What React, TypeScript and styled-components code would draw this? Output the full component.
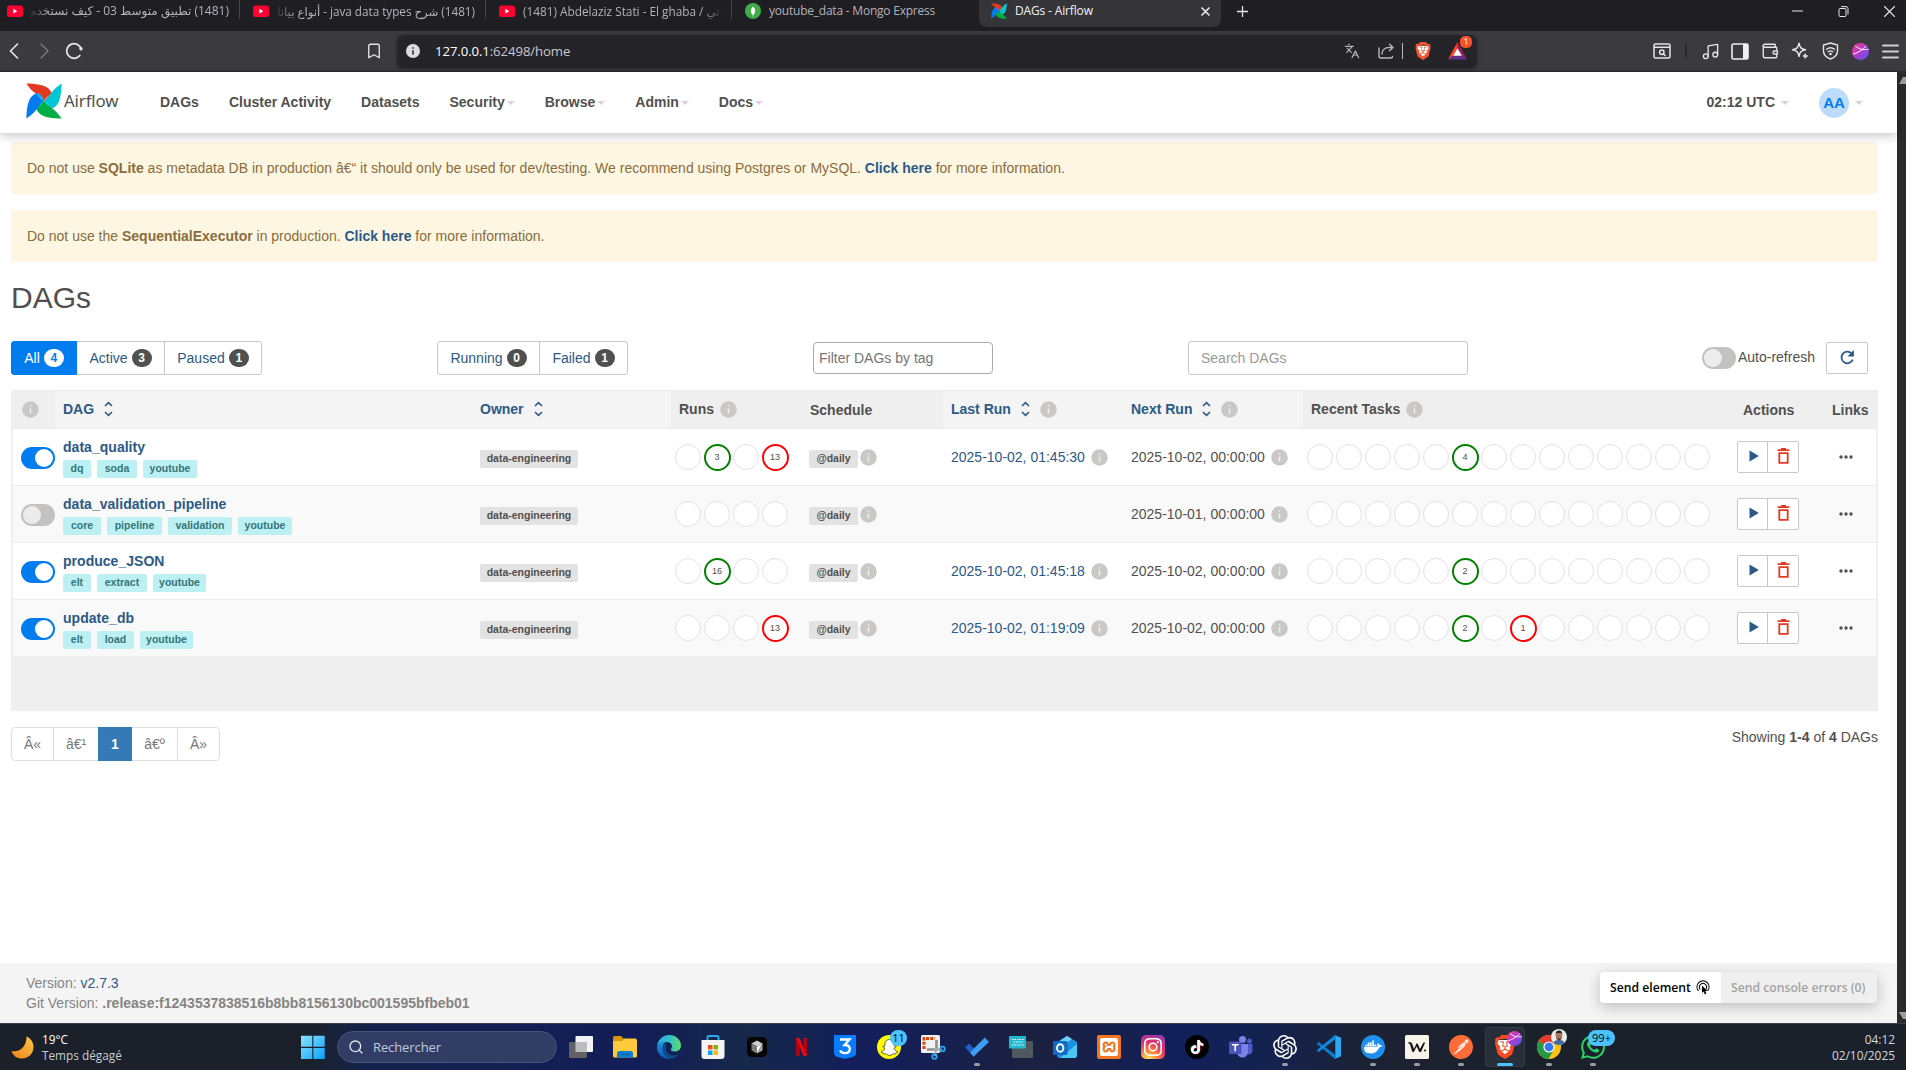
import React from "react";
import styled, { createGlobalStyle, css } from "styled-components";
import { SiBrave, SiOpenai, SiDocker, SiPostman, SiInstagram, SiTiktok, SiSnapchat, SiXampp, SiWhatsapp } from "react-icons/si";
import { Bookmark, Languages, Music, Wallet, Search } from "lucide-react";

const UI = `"Open Sans", "Noto Sans", "DejaVu Sans", sans-serif`;
const SANS = `"Liberation Sans", Arial, sans-serif`;
const LINK = "#2c5987";

const Global = createGlobalStyle`
  * { box-sizing: border-box; }
  html, body { margin: 0; padding: 0; overflow: hidden; background: #fff; }
  svg { display: block; flex: none; }
`;

const Screen = styled.div`
  width: 1906px;
  height: 1070px;
  display: flex;
  flex-direction: column;
  overflow: hidden;
  font-family: ${SANS};
  font-size: 14px;
  color: #51504f;
`;

/* ---------- browser chrome ---------- */

const TabStrip = styled.div`
  height: 31px;
  flex: none;
  display: flex;
  background: #1f1e23;
  font-family: ${UI};
  font-size: 12px;
`;

const Tab = styled.div<{ $first?: boolean }>`
  width: ${(p) => (p.$first ? 240 : 246)}px;
  height: 27px;
  flex: none;
  display: flex;
  align-items: center;
  padding: 0 11px 5px ${(p) => (p.$first ? 7 : 13)}px;
  gap: 8px;
  color: #b4b3b8;
  background: linear-gradient(#45444a, #45444a) right 0 top 0 / 1px 19px no-repeat;
`;

const ActiveTab = styled.div`
  width: 242px;
  height: 27px;
  margin-left: 1px;
  flex: none;
  display: flex;
  align-items: center;
  gap: 8px;
  padding: 0 11px 5px 12px;
  color: #f2f2f4;
  background: #353439;
  border-radius: 0 0 8px 8px;
`;

const PlainTab = styled(Tab)`
  background: none;
`;

const TabTitle = styled.div<{ $rtl?: boolean; $fade?: boolean; $ls?: number; $fs?: number }>`
  flex: 1;
  min-width: 0;
  overflow: hidden;
  white-space: nowrap;
  line-height: 20px;
  font-size: ${(p) => p.$fs ?? 12}px;
  letter-spacing: ${(p) => p.$ls ?? 0}px;
  direction: ${(p) => (p.$rtl ? "rtl" : "ltr")};
  ${(p) =>
    p.$fade &&
    css`
      mask-image: linear-gradient(to ${p.$rtl ? "left" : "right"}, #000 90%, rgba(0, 0, 0, 0.15));
    `}
`;

const PlusBox = styled.div`
  width: 42px;
  height: 22px;
  display: grid;
  place-items: center;
`;

const WindowButtons = styled.div`
  margin: 0 -6px 0 auto;
  display: flex;
  height: 22px;
`;

const WindowButton = styled.div`
  width: 46px;
  display: grid;
  place-items: center;
`;

const Toolbar = styled.div`
  height: 41px;
  flex: none;
  display: flex;
  align-items: center;
  background: #3b3a3f;
  border-bottom: 1px solid #2a292d;
  color: #e6e6e8;
`;

const NavButtons = styled.div`
  display: flex;
  align-items: center;
  width: 365px;
  padding-left: 7px;
  gap: 15px;
`;

const UrlBar = styled.div`
  width: 1080px;
  height: 33px;
  margin-left: 16px;
  display: flex;
  align-items: center;
  padding: 0 1px 0 9px;
  border-radius: 7px;
  background: #252429;
  box-shadow: 0 1px 4px rgba(0, 0, 0, 0.35);
`;

const BookmarkSlot = styled.div`
  width: 16px;
`;

const UrlText = styled.div`
  font-family: ${UI};
  font-size: 13.2px;
  letter-spacing: -0.1px;
  margin-left: 15px;
  color: #c9c9cd;
  flex: 1;
  b { font-weight: 400; color: #fff; }
`;

const UrlIcons = styled.div`
  display: flex;
  align-items: center;
  color: #b9b9bd;
`;

const ShareSlot = styled.div`
  margin-left: 18px;
`;

const UrlDivider = styled.i`
  width: 1px;
  height: 16px;
  margin: 0 11px 0 8px;
  background: #b9b9bd;
`;

const RewardSlot = styled.div`
  position: relative;
  width: 28px;
  margin-left: 16px;
`;

const RewardBadge = styled.span`
  position: absolute;
  right: 4px;
  top: -6px;
  width: 12px;
  height: 12px;
  border-radius: 5px;
  background: #f9502a;
  color: #fff;
  font: 9px/12px ${UI};
  text-align: center;
`;

const ToolIcons = styled.div`
  margin-left: auto;
  display: flex;
  align-items: center;
`;

const ToolSlot = styled.div<{ $w?: number }>`
  width: ${(p) => p.$w ?? 30}px;
  display: grid;
  place-items: center;
`;

/* ---------- web page ---------- */

const PageRow = styled.div`
  height: 951px;
  flex: none;
  display: flex;
`;

const Page = styled.div`
  width: 1897px;
  flex: none;
  display: flex;
  flex-direction: column;
  background: #fff;
`;

const Scrollbar = styled.div`
  flex: 1;
  background: #2b2b2b;
  display: flex;
  flex-direction: column;
  justify-content: space-between;
  align-items: flex-end;
  padding: 5px 0 4px;
  overflow: hidden;
`;

const NavBar = styled.nav`
  height: 61px;
  flex: none;
  display: flex;
  align-items: center;
  padding: 0 34px 2px 26px;
  background: #fff;
  position: relative;
  z-index: 1;
  box-shadow: 0 3px 10px rgba(0, 0, 0, 0.22);
  font-weight: 700;
`;

const Brand = styled.div`
  display: flex;
  align-items: center;
  width: 134px;
  gap: 2px;
  padding-bottom: 2px;
  font: 400 16.8px/20px "Noto Sans", sans-serif;
  letter-spacing: -0.1px;
`;

const NavItem = styled.div<{ $gap?: number; $last?: boolean }>`
  margin-right: ${(p) => (p.$last ? 0 : 30)}px;
  display: flex;
  align-items: center;
  gap: ${(p) => p.$gap ?? 2}px;
`;

const NavRight = styled.div`
  margin-left: auto;
  display: flex;
  align-items: center;
`;

const Caret = styled.i`
  border: 4px solid transparent;
  border-bottom: 0;
  border-top-color: #e3cfe3;
  margin-top: 2px;
`;

const Avatar = styled.span`
  width: 30px;
  height: 30px;
  border-radius: 50%;
  background: #bddcfb;
  color: #017cee;
  display: grid;
  place-items: center;
  font-size: 15px;
  margin-top: 2px;
`;

const Content = styled.main`
  flex: 1;
  display: flex;
  flex-direction: column;
  padding: 9px 19px 0 11px;
`;

const Alert = styled.div`
  height: 52px;
  margin-bottom: 16px;
  padding: 0 16px;
  display: flex;
  align-items: center;
  border-radius: 3px;
  background: #fdf6e3;
  color: #8a6d3b;
  white-space: pre;
  a { color: ${LINK}; font-weight: 700; }
`;

const Heading = styled.h2`
  margin: 3px 0 0;
  font-size: 30px;
  line-height: 34px;
  font-weight: 400;
`;

const Controls = styled.div`
  height: 34px;
  margin-top: 26px;
  display: grid;
  grid-template-columns: 426px 376px 375px 1fr;
  align-items: center;
`;

const Group = styled.div`
  display: flex;
`;

const FilterButton = styled.div<{ $on?: boolean; $w: number }>`
  width: ${(p) => p.$w}px;
  height: 34px;
  display: flex;
  align-items: center;
  justify-content: center;
  gap: 4px;
  border: 1px solid #c8c8c8;
  margin-left: -1px;
  color: ${LINK};
  &:first-child { margin-left: 0; border-radius: 3px 0 0 3px; }
  &:last-child { border-radius: 0 3px 3px 0; }
  ${(p) => p.$on && css`background: #017cee; border-color: #017cee; color: #fff; z-index: 1;`}
`;

const Count = styled.span<{ $on?: boolean }>`
  width: 20px;
  height: 18px;
  border-radius: 9px;
  background: ${(p) => (p.$on ? "#fff" : "#51504f")};
  color: ${(p) => (p.$on ? "#017cee" : "#fff")};
  font-size: 12px;
  font-weight: 700;
  line-height: 18px;
  text-align: center;
`;

const TagFilter = styled.div`
  width: 180px;
  height: 32px;
  border: 1px solid #aaa;
  border-radius: 4px;
  padding-left: 5px;
  line-height: 30px;
  color: #757575;
`;

const SearchBox = styled.div`
  width: 280px;
  height: 34px;
  border: 1px solid #c8c8c8;
  border-radius: 3px;
  padding-left: 12px;
  line-height: 32px;
  color: #999;
`;

const RefreshArea = styled.div`
  display: flex;
  align-items: center;
  justify-content: flex-end;
  padding-right: 10px;
`;

const SearchRow = styled.div`
  display: flex;
  align-items: center;
  justify-content: space-between;
`;

const RefreshLabel = styled.span`
  margin: 0 11px 2px 2px;
`;

const RefreshButton = styled.div`
  width: 42px;
  height: 32px;
  border: 1px solid #c8c8c8;
  border-radius: 2px;
  display: grid;
  place-items: center;
  padding-bottom: 2px;
`;

const Switch = styled.span<{ $on?: boolean; $drop?: boolean }>`
  width: 34px;
  height: 22px;
  flex: none;
  border-radius: 11px;
  padding: 2px;
  margin-top: ${(p) => (p.$drop ? 2 : 0)}px;
  display: flex;
  justify-content: ${(p) => (p.$on ? "flex-end" : "flex-start")};
  background: ${(p) => (p.$on ? "#017cee" : "#c4c2c1")};
  &::after {
    content: "";
    width: 18px;
    height: 18px;
    border-radius: 50%;
    background: ${(p) => (p.$on ? "#fff" : "#edecec")};
  }
`;

const Table = styled.div`
  margin-top: 15px;
  height: 321px;
  background: #efefef;
  border-radius: 3px 3px 0 0;
`;

const columns = css`
  display: grid;
  grid-template-columns: 44px 416px 200px 131px 141px 180px 180px 425px 101px 1fr;
`;

const HeadRow = styled.div`
  ${columns}
  height: 39px;
  border: solid #ececec;
  border-width: 1px 0;
  font-weight: 700;
`;

const HeadCell = styled.div<{ $sort?: boolean; $pl?: number; $drop?: boolean }>`
  display: flex;
  align-items: center;
  gap: ${(p) => (p.$sort ? 10 : 6)}px;
  padding-left: ${(p) => p.$pl ?? 8}px;
  padding-bottom: ${(p) => (p.$drop ? 0 : 1)}px;
  white-space: nowrap;
  ${(p) => p.$sort && css`background: #f4f4f4; color: ${LINK};`}
`;

const Row = styled.div<{ $odd?: boolean; $last?: boolean }>`
  ${columns}
  grid-template-columns: 42px 416px 200px 131px 141px 180px 180px 425px 101px 1fr;
  height: ${(p) => (p.$last ? 56 : 57)}px;
  margin: 0 2px;
  background: ${(p) => (p.$odd ? "#f9f9f9" : "#fff")};
  border-bottom: ${(p) => (p.$last ? 0 : 1)}px solid #ececec;
`;

const Cell = styled.div<{ $pl?: number; $gap?: number }>`
  display: flex;
  align-items: center;
  padding-left: ${(p) => p.$pl ?? 8}px;
  gap: ${(p) => p.$gap ?? 0}px;
  white-space: nowrap;
`;

const NameCell = styled.div`
  padding: 9px 0 0 8px;
  display: flex;
  flex-direction: column;
  gap: 3px;
`;

const DagName = styled.a`
  font-weight: 700;
  line-height: 19px;
  letter-spacing: 0.03px;
  color: ${LINK};
`;

const Tags = styled.div`
  display: flex;
  gap: 6px;
`;

const Tag = styled.span<{ $w: number }>`
  width: ${(p) => p.$w}px;
  height: 18px;
  border-radius: 2px;
  background: #bcf0f2;
  color: #35757a;
  font-size: 10.5px;
  font-weight: 700;
  line-height: 17px;
  text-align: center;
`;

const Label = styled.span<{ $w: number }>`
  width: ${(p) => p.$w}px;
  height: 18px;
  margin-top: 3px;
  border-radius: 2px;
  background: #e2e2e2;
  color: #51504f;
  font-size: 10.5px;
  font-weight: 700;
  line-height: 17px;
  text-align: center;
`;

const RunLink = styled.a`
  color: ${LINK};
`;

const Circles = styled.div`
  display: flex;
  gap: 3px;
  align-items: center;
  height: 28px;
`;

const Circle = styled.span<{ $c?: string }>`
  width: ${(p) => (p.$c ? 27 : 26)}px;
  height: ${(p) => (p.$c ? 27 : 26)}px;
  margin: 0 ${(p) => (p.$c ? "-0.5px" : "0")};
  border-radius: 50%;
  border: ${(p) => (p.$c ? `2px solid ${p.$c}` : "1px solid #e2e2e2")};
  background: #fff;
  font-size: 9px;
  line-height: 23px;
  text-align: center;
`;

const Actions = styled.div`
  display: flex;
  width: 62px;
  height: 32px;
  border: 1px solid #c8c8c8;
  border-radius: 2px;
  background: #fff;
`;

const Action = styled.span<{ $w: number; $pl?: number }>`
  width: ${(p) => p.$w}px;
  padding: 0 0 2px ${(p) => p.$pl ?? 0}px;
  display: grid;
  place-items: center;
  & + & { border-left: 1px solid #c8c8c8; }
`;

const BelowTable = styled.div`
  display: flex;
  justify-content: space-between;
  margin-top: 16px;
`;

const Showing = styled.div`
  padding-top: 2px;
`;

const PageButton = styled.div<{ $on?: boolean; $w: number }>`
  width: ${(p) => p.$w}px;
  height: 34px;
  border: 1px solid #ddd;
  margin-left: -1px;
  line-height: 32px;
  text-align: center;
  color: #777;
  &:first-child { margin-left: 0; border-radius: 4px 0 0 4px; }
  &:last-child { border-radius: 0 4px 4px 0; }
  ${(p) => p.$on && css`background: #337ab7; border-color: #337ab7; color: #fff; z-index: 1;`}
`;

const Footer = styled.footer`
  height: 60px;
  flex: none;
  display: flex;
  justify-content: space-between;
  padding: 9px 20px 0 26px;
  background: #f4f4f4;
  color: #868483;
  line-height: 20px;
  a { color: ${LINK}; }
`;

const Versions = styled.div`
  padding-top: 1px;
`;

const SendBox = styled.div`
  display: flex;
  width: 277px;
  height: 31px;
  border-radius: 4px;
  overflow: hidden;
  background: #efefef;
  box-shadow: 0 4px 14px rgba(0, 0, 0, 0.22);
`;

const SendPart = styled.div<{ $off?: boolean }>`
  width: ${(p) => (p.$off ? 156 : 121)}px;
  padding-left: 10px;
  display: flex;
  align-items: center;
  gap: 5px;
  white-space: nowrap;
  font: 600 12.2px/31px "Open Sans", sans-serif;
  background: ${(p) => (p.$off ? "#efefef" : "#fff")};
  color: ${(p) => (p.$off ? "#a3a3a3" : "#000")};
`;

/* ---------- taskbar ---------- */

const Taskbar = styled.div`
  height: 47px;
  flex: none;
  display: flex;
  align-items: center;
  padding: 0 11px;
  border-top: 1px solid #3b404a;
  background: linear-gradient(90deg, #1b2029 0, #1b212c 310px, #12224c 370px, #131d58 640px, #16284a 740px, #131e5c 870px, #1b2140 1030px, #12205a 1180px, #14224f 1270px, #1c2233 1370px, #1b212b 1500px);
  color: #fff;
  font-family: ${UI};
  font-size: 12px;
`;

const Weather = styled.div`
  display: flex;
  align-items: center;
  gap: 8px;
  width: 290px;
  line-height: 16px;
  font-size: 11.8px;
  span { color: #c9ccd1; }
`;

const StartSlot = styled.div`
  width: 36px;
`;

const SearchPill = styled.div`
  width: 220px;
  height: 32px;
  border-radius: 16px;
  border: 1px solid #46527a;
  background: #323d66;
  display: flex;
  align-items: center;
  gap: 9px;
  padding-left: 10px;
  font-size: 13px;
  letter-spacing: -0.1px;
  color: #c3c8d6;
`;

const Apps = styled.div`
  display: flex;
  margin-left: 2px;
`;

const AppSlot = styled.div<{ $run?: boolean; $active?: boolean }>`
  position: relative;
  width: 44px;
  height: 44px;
  display: grid;
  place-items: center;
  ${(p) =>
    p.$active &&
    css`
      background: #282f3b;
      box-shadow: inset 0 0 0 1px #353c48;
      border-radius: 4px;
      width: 40px;
      height: 40px;
      margin: 2px;
    `}
  ${(p) =>
    (p.$run || p.$active) &&
    css`
      &::after {
        content: "";
        position: absolute;
        bottom: ${p.$active ? 1 : 3}px;
        width: ${p.$active ? 16 : 6}px;
        height: 3px;
        border-radius: 2px;
        background: ${p.$active ? "#4cc2ff" : "#9a9da5"};
      }
    `}
`;

const AppBadge = styled.span<{ $w: number; $r: number }>`
  position: absolute;
  top: 5px;
  right: ${(p) => p.$r}px;
  width: ${(p) => p.$w}px;
  height: 16px;
  border-radius: 8px;
  background: #4cc2ff;
  color: #000;
  font-size: 11px;
  line-height: 16px;
  text-align: center;
`;

const AppOverlay = styled.span<{ $r?: number }>`
  position: absolute;
  top: 4px;
  right: ${(p) => p.$r ?? 4}px;
`;

const Tile = styled.span<{ $bg: string; $r?: number }>`
  width: 24px;
  height: 24px;
  border-radius: ${(p) => p.$r ?? 2}px;
  background: ${(p) => p.$bg};
  display: grid;
  place-items: center;
  color: #fff;
`;

const Clock = styled.div`
  margin-left: auto;
  text-align: right;
  line-height: 16px;
  color: #d6d8dc;
  font-size: 11.9px;
`;

/* ---------- drawings ---------- */

const YouTube = () => (
  <svg width="16" height="16" viewBox="0 0 16 16">
    <rect y="2.5" width="16" height="11.5" rx="2.6" fill="#ff0033" />
    <path d="M6.4 5.8 10.2 8.2 6.4 10.6z" fill="#fff" />
  </svg>
);

const Mongo = () => (
  <svg width="16" height="16" viewBox="0 0 16 16">
    <circle cx="8" cy="8" r="8" fill="#42ab49" />
    <path d="M8 3.500c2 2 2.200 3.300 2.100 4.700C10 10 9 11.500 8 12.200 7 11.500 6 10 5.900 8.200 5.800 6.800 6 5.500 8 3.500z" fill="#fff" />
    <path d="M8 12v2" stroke="#cfe8d0" strokeWidth=".6" />
  </svg>
);

const Pinwheel = ({ size }: { size: number }) => {
  const blades: [number, string, string][] = [
    [0, "#e43921", "#ff7557"],
    [90, "#00c7d4", "#11e1ee"],
    [180, "#00ad46", "#04d659"],
    [270, "#017cee", "#0cb6ff"],
  ];
  return (
    <svg width={size} height={size} viewBox="0 0 36 36">
      {blades.map(([a, c, tip]) => (
        <g key={a} transform={`rotate(${a} 18 18)`}>
          <path d="M18 18 C19 15.500 22.500 13 25.600 10.500 C26 13 24 16.500 18 18z" fill={tip} />
          <path d="M.4.4 C9 .6 18.500 1.600 22.500 5.600 C24.500 7.600 25.600 9.500 25.600 10.600 C22.500 12.800 19.500 15.200 18 18 C15.500 14 10.500 11.800 7.200 8.600 C4.500 6 2.200 3.200 .4.4z" fill={c} />
        </g>
      ))}
    </svg>
  );
};

const InfoDot = () => (
  <svg width="17" height="17" viewBox="0 0 17 17">
    <circle cx="8.500" cy="8.500" r="8.300" fill="#c9c8c7" />
    <path d="M8.500 7.400v5M8.500 4.300v1.500" stroke="#efefef" strokeWidth="1.500" />
  </svg>
);

const SortIcon = () => (
  <svg width="9" height="16" viewBox="0 0 9 16" fill="none" stroke={LINK} strokeWidth="1.600">
    <path d="M1 5 4.500 1.700 8 5M1 11 4.500 14.300 8 11" />
  </svg>
);

const PlayIcon = () => (
  <svg width="10" height="12" viewBox="0 0 10 12">
    <path d="M.5.5 9.800 6 .5 11.500z" fill={LINK} />
  </svg>
);

const TrashIcon = () => (
  <svg width="13" height="16" viewBox="0 0 13 16" fill="none" stroke="#e43921" strokeWidth="1.800">
    <path d="M.6 2.200h11.800M4 .9h5M2.300 5.100h8.400v9.800H2.300z" />
  </svg>
);

const Dots = () => (
  <svg width="14" height="4" viewBox="0 0 14 4" fill="#51504f">
    <circle cx="2" cy="2" r="1.700" /><circle cx="7" cy="2" r="1.700" /><circle cx="12" cy="2" r="1.700" />
  </svg>
);

const RefreshIcon = () => (
  <svg width="15" height="15" viewBox="0 0 16 16">
    <path d="M13.600 10.200A6.200 6.200 0 1 1 12.300 3.700" fill="none" stroke={LINK} strokeWidth="1.900" />
    <path d="M14.800 0v6.800H8z" fill={LINK} />
  </svg>
);

const BraveMark = ({ size, color }: { size: number; color: string }) => (
  <svg width={size} height={size} viewBox="0 0 24 24">
    <path d="M5 5h14l1 5-3 8-5 4-5-4-3-8z" fill="#fff" />
    <SiBrave size={24} color={color} />
  </svg>
);

const PostmanMark = () => (
  <svg width="24" height="24" viewBox="0 0 24 24">
    <circle cx="12" cy="12" r="10.500" fill="#fff" />
    <SiPostman size={24} color="#ff6c37" />
  </svg>
);

const Bat = () => (
  <svg width="19" height="18" viewBox="0 0 20 19">
    <path d="M10 0 10 6.500 5.400 14.500 0 18.500z" fill="#ff4724" />
    <path d="M10 0 20 18.500 14.600 14.500 10 6.500z" fill="#9e1f63" />
    <path d="M0 18.500h20l-5.400-4H5.400z" fill="#662d91" />
    <path d="M10 6.500 14.600 14.500H5.400z" fill="#fff" />
  </svg>
);

const Planet = ({ size }: { size: number }) => (
  <svg width={size} height={size} viewBox="0 0 16 16">
    <defs>
      <linearGradient id={`pl${size}`} x1="0" y1="0" x2="1" y2="1">
        <stop offset="0" stopColor="#f4407a" /><stop offset=".5" stopColor="#b23ad0" /><stop offset="1" stopColor="#4a5cf0" />
      </linearGradient>
    </defs>
    <circle cx="8" cy="8" r="8" fill={`url(#pl${size})`} />
    <path d="M.8 10.500C5 9.500 9.500 7 13.500 2.800M3 2.500C6 5.500 10 6.800 15.600 6" stroke="#fff" strokeWidth=".9" fill="none" />
  </svg>
);

const Line = ({ w, h, d, sw = 1.6, c = "#e6e6e8" }: { w: number; h: number; d: string; sw?: number; c?: string }) => (
  <svg width={w} height={h} viewBox={`0 0 ${w} ${h}`} fill="none" stroke={c} strokeWidth={sw} strokeLinejoin="round" strokeLinecap="round">
    <path d={d} />
  </svg>
);

const TaskView = () => (
  <svg width="24" height="24" viewBox="0 0 24 24">
    <rect x="6.500" y="1" width="17.500" height="16" rx="1" fill="#f3f3f5" />
    <rect x="0" y="7" width="18" height="16" rx="1" fill="#666" fillOpacity=".95" />
    <rect x="6.500" y="7" width="11.500" height="10" fill="#bdbdbd" />
  </svg>
);
const Folder = () => (
  <svg width="24" height="24" viewBox="0 0 24 24">
    <path d="M0 3a2 2 0 0 1 2-2h6l3 3-3 3H0z" fill="#d9960a" />
    <path d="M0 6h9l2-2.500h11a2 2 0 0 1 2 2V21a1.500 1.500 0 0 1-1.500 1.500h-21A1.500 1.500 0 0 1 0 21z" fill="#ffcb3d" />
    <path d="M4 22.500v-4A2.500 2.500 0 0 1 6.500 16h11a2.500 2.500 0 0 1 2.500 2.500v4z" fill="#0c7cd0" />
    <path d="M8 19.500h8" stroke="#0a5ea3" strokeWidth="1.200" />
  </svg>
);
const Edge = () => (
  <svg width="24" height="24" viewBox="0 0 24 24">
    <defs>
      <linearGradient id="eg1" x1="0" x2="1"><stop offset="0" stopColor="#2aa9e8" /><stop offset=".55" stopColor="#35c1c4" /><stop offset="1" stopColor="#62dd62" /></linearGradient>
      <linearGradient id="eg2" x1="0" x2="0" y2="1"><stop offset="0" stopColor="#1697dd" /><stop offset="1" stopColor="#0b57b5" /></linearGradient>
    </defs>
    <path d="M0 11C1 4.500 6 0 12.200 0 19 0 24 5 24 10.500c0 3.800-2.800 6-6 6-2.800 0-4.400-1-4.200-2 .2-.8 1.200-1.200 1.200-3.200 0-2-2-4.300-5.500-4.300C5 7 1 9 0 11z" fill="url(#eg1)" />
    <path d="M0 12C.6 8.500 4.500 6.600 9 6.800c-2 1-3.600 3.600-3.400 7C5.900 18.500 9.500 22 13 23.900 5 24.500-.5 18 0 12z" fill="url(#eg2)" />
    <path d="M9.500 11.500C7.500 16 12 21 18 20.200c1.500-.2 2.800-.7 3.800-1.400C19.800 22 16.500 24 12.800 24 8 22.500 5.300 18 5.700 13.600 6 10.500 8 8 9.800 7c-.5 1-.8 3-.3 4.500z" fill="#114a8b" />
  </svg>
);
const Store = () => (
  <svg width="24" height="24" viewBox="0 0 24 24">
    <path d="M6.500 6V2.500A1.500 1.500 0 0 1 8 1h8a1.500 1.500 0 0 1 1.500 1.500V6" fill="none" stroke="#27a8e6" strokeWidth="2" />
    <path d="M.5 5h23v16a3 3 0 0 1-3 3h-17a3 3 0 0 1-3-3z" fill="#f4f4f4" />
    <path d="M7 10h4.500v4.500H7z" fill="#f25022" /><path d="M12.500 10H17v4.500h-4.500z" fill="#7fba00" />
    <path d="M7 15.500h4.500V20H7z" fill="#00a4ef" /><path d="M12.500 15.500H17V20h-4.500z" fill="#ffb900" />
  </svg>
);
const Cube = () => (
  <svg width="20" height="20" viewBox="0 0 20 20">
    <rect width="20" height="20" rx="4.500" fill="#050505" />
    <path d="M10 3.500 15.500 6.500 10 9.500 4.500 6.500z" fill="#cfcfcf" />
    <path d="M4.500 6.500 10 9.500v7L4.500 13.500z" fill="#7d7d7d" />
    <path d="M15.500 6.500 10 16.500v-7z" fill="#fafafa" /><path d="M15.500 6.500v7l-5.500 3z" fill="#a9a9a9" />
  </svg>
);
const Netflix = () => (
  <svg width="11" height="18" viewBox="0 0 11 18">
    <path d="M0 0h3.600v18L0 17.600zM7.400 0H11v17.600L7.400 18z" fill="#b1060f" />
    <path d="M0 0h3.600L11 17.600 7.400 18z" fill="#e50914" />
  </svg>
);
const Css3 = () => (
  <svg width="22" height="24" viewBox="0 0 22 24" fill="none">
    <path d="M0 0h22v18c0 2-1 3-3 3.800L11 24 3 21.800C1 21 0 20 0 18z" fill="#0a7cff" />
    <path d="M6 4.500h9.500L10.500 10c3.500 0 5.300 1.500 5.300 4 0 2.600-2 4.200-4.800 4.200-2.300 0-4-1-5-2.700" stroke="#fff" strokeWidth="2.300" />
  </svg>
);
const Snip = () => (
  <svg width="25" height="25" viewBox="0 0 25 25" fill="none">
    <rect x="0" y="0" width="19" height="18" rx="1.500" fill="#f1f1f1" />
    <path d="M3 14V3.500h11" stroke="#d8430e" strokeWidth="3" strokeDasharray="3 1.200" />
    <path d="M6 14.500h9.500V5" stroke="#8f8f8f" strokeWidth="2.600" />
    <path d="m14 14 7 1M15 14l-1 7" stroke="#a9a9a9" strokeWidth="2" />
    <circle cx="21.500" cy="14" r="2.300" stroke="#2aa3ea" strokeWidth="1.800" /><circle cx="13.500" cy="21.500" r="2.300" stroke="#2aa3ea" strokeWidth="1.800" />
  </svg>
);
const Todo = () => (
  <svg width="24" height="20" viewBox="0 0 24 20">
    <path d="M0 10.500 4 6.500 12.500 15 9 19.500z" fill="#1c5fc9" /><path d="M8.500 19.500 5 15.500 19.800.5 24 5z" fill="#3f9cf0" />
  </svg>
);
const Keyboard = () => (
  <svg width="24" height="22" viewBox="0 0 24 22">
    <rect x="3" y="5" width="21" height="17" rx="1" fill="#50585f" /><rect width="17" height="12.500" rx="1" fill="#22b8cf" />
    <path d="M3 3.500h11.500M4.500 6h9M3 9h11.500" stroke="#fff" strokeWidth="1.200" strokeDasharray="1.500 1" />
  </svg>
);
const Outlook = () => (
  <svg width="24" height="24" viewBox="0 0 24 24" fill="none">
    <path d="M4 7 14 1l10 6v13a3 3 0 0 1-3 3H7a3 3 0 0 1-3-3z" fill="#1d8fe0" /><path d="M4 8 14 1l5 3-12 9z" fill="#6fd0f7" />
    <path d="M24 9v11a3 3 0 0 1-3 3H7z" fill="#49c8f3" /><rect y="6" width="14.500" height="14" rx="1.500" fill="#0f6cc4" />
    <ellipse cx="7.200" cy="13" rx="3.200" ry="3.800" stroke="#fff" strokeWidth="1.900" />
  </svg>
);
const Teams = () => (
  <svg width="24" height="22" viewBox="0 0 24 22">
    <circle cx="20.500" cy="5" r="2.500" fill="#5059c9" /><circle cx="13.500" cy="3.500" r="3.500" fill="#7b83eb" />
    <path d="M17 8h6.500v6.500a4 4 0 0 1-6.500 3z" fill="#5059c9" /><path d="M8 8h11v8a5.500 5.500 0 0 1-11 0z" fill="#7b83eb" />
    <rect y="5.500" width="12.500" height="12.500" rx="1" fill="#4b53bc" /><path d="M3 8.800h6.500M6.250 8.800v6.500" stroke="#fff" strokeWidth="1.600" />
  </svg>
);
const VsCode = () => (
  <svg width="24" height="24" viewBox="0 0 24 24">
    <path d="M0 8.300 1.600 7 18 19.500V24L.3 9.200z" fill="#0b7dc7" /><path d="M0 15.700 1.600 17 18 4.500V0L.3 14.800z" fill="#0f8ad8" />
    <path d="M17.500 0 24 2.800v18.400L17.500 24c.5-.3.800-1 .8-1.700V1.700c0-.8-.3-1.400-.8-1.700z" fill="#29a9f2" />
  </svg>
);
const Tiktok = () => (
  <svg width="24" height="24" viewBox="0 0 24 24">
    <circle cx="12" cy="12" r="12" fill="#000" />
    <g transform="translate(4.700 4.700)"><SiTiktok size={14} color="#25f4ee" /></g>
    <g transform="translate(5.700 5.500)"><SiTiktok size={14} color="#fe2c55" /></g>
    <g transform="translate(5.200 5.100)"><SiTiktok size={14} color="#fff" /></g>
  </svg>
);
const Chrome = () => (
  <svg width="24" height="24" viewBox="0 0 24 24">
    <circle cx="12" cy="12" r="12" fill="#fbc116" />
    <path d="M12 12 1.600 6A12 12 0 0 1 22.400 6z" fill="#e33b2e" /><path d="M12 12 1.600 6A12 12 0 0 0 11.500 24l5-9z" fill="#279847" />
    <circle cx="12" cy="12" r="5.600" fill="#fff" /><circle cx="12" cy="12" r="4.400" fill="#2f78f0" />
  </svg>
);
const Face = () => (
  <svg width="16" height="16" viewBox="0 0 16 16">
    <defs><clipPath id="face"><circle cx="8" cy="8" r="8" /></clipPath></defs>
    <g clipPath="url(#face)">
      <rect width="16" height="16" fill="#e9ecee" /><path d="M2 16c0-4 3-5 6-5s6 1 6 5z" fill="#3a6ba5" />
      <ellipse cx="8" cy="7" rx="3.200" ry="4.500" fill="#a8745a" /><path d="M4.600 6C4.500 2.500 6 1.400 8 1.400s3.500 1.100 3.400 4.600L10.500 4h-5z" fill="#2b211d" />
      <path d="M5.500 9.500h5L8 12z" fill="#4d3a33" />
    </g>
  </svg>
);
const Ww = () => (
  <svg width="24" height="24" viewBox="0 0 24 24">
    <rect width="24" height="24" rx="1.500" fill="#faf3ea" />
    <path d="M3 7.500c2-.8 3.500-.3 4.200 1.500l1.800 5 2.500-5.500h1.200l2.200 5.500L18.500 7.500h1.700L16 17h-1.700l-2.600-5.500L8.800 17H7.400L5.200 10C4.800 8.800 4 8.300 3 8.300z" fill="#111" />
    <circle cx="20" cy="15.500" r="1" fill="#111" />
  </svg>
);
const Moon = () => (
  <svg width="23" height="23" viewBox="0 0 23 23">
    <defs><linearGradient id="mn" x1="0" y1="1" x2="1" y2="0"><stop offset="0" stopColor="#f08019" /><stop offset="1" stopColor="#fbc94a" /></linearGradient></defs>
    <path d="M15.500.5C20 2.500 22.500 6.500 22.500 11c0 6.500-5 11.500-11.500 11.500C6 22.500 2 20 .5 15c7 1.500 15-3 15-14.500z" fill="url(#mn)" />
  </svg>
);
const Windows = () => (
  <svg width="24" height="24" viewBox="0 0 24 24">
    <defs><linearGradient id="wn" x1="0" y1="0" x2="1" y2="1"><stop offset="0" stopColor="#8ae4ff" /><stop offset="1" stopColor="#0ba0fb" /></linearGradient></defs>
    <path d="M0 .8h11.300v11H0zM12.400.8H23.700v11H12.400zM0 12.900h11.300v11H0zM12.400 12.900h11.300v11H12.400z" fill="url(#wn)" />
  </svg>
);

/* ---------- data ---------- */

type Dag = {
  name: string;
  tags: [string, number][];
  on: boolean;
  runs: (string | null)[];
  last?: string;
  next: string;
  tasks: Record<number, [string, string]>;
};

const GREEN = "#008000";
const RED = "#f00";

const dags: Dag[] = [
  { name: "data_quality", tags: [["dq", 28], ["soda", 40], ["youtube", 54]], on: true, runs: [null, "3", null, "13"], last: "2025-10-02, 01:45:30", next: "2025-10-02, 00:00:00", tasks: { 5: ["4", GREEN] } },
  { name: "data_validation_pipeline", tags: [["core", 38], ["pipeline", 55], ["validation", 64], ["youtube", 54]], on: false, runs: [null, null, null, null], next: "2025-10-01, 00:00:00", tasks: {} },
  { name: "produce_JSON", tags: [["elt", 28], ["extract", 50], ["youtube", 53]], on: true, runs: [null, "16", null, null], last: "2025-10-02, 01:45:18", next: "2025-10-02, 00:00:00", tasks: { 5: ["2", GREEN] } },
  { name: "update_db", tags: [["elt", 28], ["load", 37], ["youtube", 53]], on: true, runs: [null, null, null, "13"], last: "2025-10-02, 01:19:09", next: "2025-10-02, 00:00:00", tasks: { 5: ["2", GREEN], 7: ["1", RED] } },
];

const DagRow = ({ dag, index }: { dag: Dag; index: number }) => (
  <Row $odd={index % 2 === 1} $last={index === dags.length - 1}>
    <Cell $pl={8}><Switch $on={dag.on} $drop /></Cell>
    <NameCell>
      <DagName>{dag.name}</DagName>
      <Tags>{dag.tags.map(([t, w]) => <Tag key={t} $w={w}>{t}</Tag>)}</Tags>
    </NameCell>
    <Cell $pl={9}><Label $w={98}>data-engineering</Label></Cell>
    <Cell $pl={4}>
      <Circles>{dag.runs.map((r, i) => <Circle key={i} $c={r ? (i === 1 ? GREEN : RED) : undefined}>{r}</Circle>)}</Circles>
    </Cell>
    <Cell $pl={7} $gap={2}><Label $w={49}>@daily</Label><InfoDot /></Cell>
    <Cell $gap={6}>{dag.last && <><RunLink>{dag.last}</RunLink><InfoDot /></>}</Cell>
    <Cell $gap={6}>{dag.next}<InfoDot /></Cell>
    <Cell $pl={4}>
      <Circles>
        {Array.from({ length: 14 }, (_, i) => <Circle key={i} $c={dag.tasks[i]?.[1]}>{dag.tasks[i]?.[0]}</Circle>)}
      </Circles>
    </Cell>
    <Cell $pl={9}>
      <Actions>
        <Action $w={29} $pl={3}><PlayIcon /></Action>
        <Action $w={31}><TrashIcon /></Action>
      </Actions>
    </Cell>
    <Cell $pl={10}><Dots /></Cell>
  </Row>
);

export default function App() {
  return (
    <Screen>
      <Global />
      <TabStrip>
        <Tab $first><YouTube /><TabTitle $rtl $fade>(1481) تطبيق متوسط 03 - كيف نستخدم</TabTitle></Tab>
        <Tab><YouTube /><TabTitle $rtl $fade $fs={11.7}>(1481) شرح java data types - أنواع بيانات</TabTitle></Tab>
        <Tab><YouTube /><TabTitle $fade $fs={11.8}>(1481) Abdelaziz Stati - El ghaba / الستاتي</TabTitle></Tab>
        <PlainTab><Mongo /><TabTitle $ls={-0.22}>youtube_data - Mongo Express</TabTitle></PlainTab>
        <ActiveTab>
          <Pinwheel size={16} /><TabTitle $ls={-0.15}>DAGs - Airflow</TabTitle>
          <Line w={9} h={9} d="M1 1 8 8M8 1 1 8" sw={1.7} />
        </ActiveTab>
        <PlusBox><Line w={11} h={11} d="M5.500.5v10M.5 5.500h10" sw={1.300} /></PlusBox>
        <WindowButtons>
          <WindowButton><Line w={11} h={2} d="M0 1h11" sw={1} /></WindowButton>
          <WindowButton><Line w={11} h={11} d="M1 3.500a1 1 0 0 1 1-1h5a1 1 0 0 1 1 1v6a1 1 0 0 1-1 1H2a1 1 0 0 1-1-1zM3.500.6H8a2 2 0 0 1 2 2V8" sw={1} /></WindowButton>
          <WindowButton><Line w={11} h={11} d="M.5.5l10 10M10.500.5l-10 10" sw={1.100} /></WindowButton>
        </WindowButtons>
      </TabStrip>

      <Toolbar>
        <NavButtons>
          <Line w={14} h={16} d="M10.500 1 3.500 8l7 7" sw={1.700} />
          <Line w={14} h={16} d="M5 1l7 7-7 7" sw={1.500} c="#77767b" />
          <svg width="18" height="18" viewBox="0 0 18 18" fill="none" stroke="#e6e6e8" strokeWidth="1.700">
            <path d="M14.800 13.500A7.300 7.300 0 1 1 16.200 7.500" strokeLinecap="round" /><circle cx="16" cy="6.800" r="1.700" fill="#e6e6e8" stroke="none" />
          </svg>
        </NavButtons>
        <BookmarkSlot><Bookmark size={18} strokeWidth={1.800} /></BookmarkSlot>
        <UrlBar>
          <svg width="14" height="14" viewBox="0 0 14 14"><circle cx="7" cy="7" r="7" fill="#dcdce0" /><path d="M7 6.200v4.300M7 3.300v1.500" stroke="#252429" strokeWidth="1.500" /></svg>
          <UrlText><b>127.0.0.1</b>:62498/home</UrlText>
          <UrlIcons>
            <Languages size={16} strokeWidth={1.700} />
            <ShareSlot><Line w={16} h={16} d="M1 5v8a2 2 0 0 0 2 2h10a1.500 1.500 0 0 0 1.500-1.500M4 11c0-4 3-6.500 7-6.500h3.500M11.500 1.200l3.500 3.300-3.500 3.300" sw={1.400} c="#b9b9bd" /></ShareSlot>
            <UrlDivider />
            <BraveMark size={18} color="#fb542b" />
            <RewardSlot><Bat /><RewardBadge>1</RewardBadge></RewardSlot>
          </UrlIcons>
        </UrlBar>
        <ToolIcons>
          <ToolSlot $w={30}><Line w={18} h={16} d="M1 2.500A1.500 1.500 0 0 1 2.500 1h13A1.500 1.500 0 0 1 17 2.500v11a1.500 1.500 0 0 1-1.500 1.500h-13A1.500 1.500 0 0 1 1 13.500zM1 4.300h16M11 9.300a2.200 2.200 0 1 1-4.400 0 2.200 2.200 0 0 1 4.400 0M10.500 11l1.500 1.500" sw={1.500} /></ToolSlot>
          <ToolSlot $w={18}><Line w={2} h={16} d="M1 1v14" sw={1.200} c="#1f1e22" /></ToolSlot>
          <ToolSlot $w={30}><Music size={19} strokeWidth={1.700} /></ToolSlot>
          <ToolSlot><svg width="18" height="17" viewBox="0 0 18 17"><rect x="1" y="1" width="16" height="15" rx="1.500" fill="none" stroke="#f0f0f2" strokeWidth="1.600" /><path d="M12 1h5v15h-5z" fill="#f0f0f2" /></svg></ToolSlot>
          <ToolSlot><Wallet size={18} strokeWidth={1.800} /></ToolSlot>
          <ToolSlot><svg width="18" height="18" viewBox="0 0 18 18" fill="none" stroke="#e6e6e8" strokeWidth="1.500" strokeLinejoin="round"><path d="M8 1.200c.9 4.600 2 5.700 6.500 6.600-4.500.9-5.600 2-6.500 6.600-.9-4.600-2-5.700-6.500-6.600C6 6.900 7.100 5.800 8 1.200z" /><path d="M14.300 11.500v5M11.800 14h5" /></svg></ToolSlot>
          <ToolSlot><svg width="17" height="18" viewBox="0 0 17 18" fill="none" stroke="#e6e6e8" strokeWidth="1.400" strokeLinecap="round"><path d="M8.500 1 15.500 3v6c0 4-3 6.500-7 8-4-1.500-7-4-7-8V3zM4.600 7.300c2.300-1.900 5.500-1.900 7.800 0M6.200 9.700c1.500-1.100 3.100-1.100 4.600 0" /><circle cx="8.500" cy="12" r=".6" /></svg></ToolSlot>
          <ToolSlot><Planet size={17} /></ToolSlot>
          <ToolSlot $w={31}><Line w={17} h={15} d="M1 1.500h15M1 7.500h15M1 13.500h15" sw={2} c="#d0d0d3" /></ToolSlot>
        </ToolIcons>
      </Toolbar>

      <PageRow>
        <Page>
          <NavBar>
            <Brand><Pinwheel size={36} />Airflow</Brand>
            <NavItem>DAGs</NavItem>
            <NavItem>Cluster Activity</NavItem>
            <NavItem>Datasets</NavItem>
            {["Security", "Browse", "Admin", "Docs"].map((t) => <NavItem key={t}>{t}<Caret /></NavItem>)}
            <NavRight>
              <NavItem $gap={6}>02:12 UTC<Caret /></NavItem>
              <NavItem $gap={6} $last><Avatar>AA</Avatar><Caret /></NavItem>
            </NavRight>
          </NavBar>

          <Content>
            <Alert>Do not use <b>SQLite</b> as metadata DB in production â€“ it should only be used for dev/testing. We recommend using Postgres or MySQL. <a>Click here</a> for more information.</Alert>
            <Alert>Do not use the <b>SequentialExecutor</b> in production. <a>Click here</a> for more information.</Alert>
            <Heading>DAGs</Heading>

            <Controls>
              <Group>
                <FilterButton $on $w={66}>All<Count $on>4</Count></FilterButton>
                <FilterButton $w={89}>Active<Count>3</Count></FilterButton>
                <FilterButton $w={98}>Paused<Count>1</Count></FilterButton>
              </Group>
              <Group>
                <FilterButton $w={103}>Running<Count>0</Count></FilterButton>
                <FilterButton $w={89}>Failed<Count>1</Count></FilterButton>
              </Group>
              <TagFilter>Filter DAGs by tag</TagFilter>
              <SearchRow>
                <SearchBox>Search DAGs</SearchBox>
                <RefreshArea>
                  <Switch /><RefreshLabel>Auto-refresh</RefreshLabel>
                  <RefreshButton><RefreshIcon /></RefreshButton>
                </RefreshArea>
              </SearchRow>
            </Controls>

            <Table>
              <HeadRow>
                <HeadCell $pl={11}><InfoDot /></HeadCell>
                <HeadCell $sort>DAG<SortIcon /></HeadCell>
                <HeadCell $sort $pl={9}>Owner<SortIcon /></HeadCell>
                <HeadCell>Runs<InfoDot /></HeadCell>
                <HeadCell $drop>Schedule</HeadCell>
                <HeadCell $sort>Last Run<SortIcon /><InfoDot /></HeadCell>
                <HeadCell $sort>Next Run<SortIcon /><InfoDot /></HeadCell>
                <HeadCell>Recent Tasks<InfoDot /></HeadCell>
                <HeadCell $drop $pl={15}>Actions</HeadCell>
                <HeadCell $drop $pl={3}>Links</HeadCell>
              </HeadRow>
              {dags.map((d, i) => <DagRow key={d.name} dag={d} index={i} />)}
            </Table>

            <BelowTable>
              <Group>
                <PageButton $w={43}>Â«</PageButton>
                <PageButton $w={46}>â€¹</PageButton>
                <PageButton $w={34} $on><b>1</b></PageButton>
                <PageButton $w={47}>â€º</PageButton>
                <PageButton $w={43}>Â»</PageButton>
              </Group>
              <Showing>Showing <b>1-4</b> of <b>4</b> DAGs</Showing>
            </BelowTable>
          </Content>

          <Footer>
            <Versions>
              <div>Version: <a>v2.7.3</a></div>
              <div>Git Version: <b>.release:f1243537838516b8bb8156130bc001595bfbeb01</b></div>
            </Versions>
            <SendBox>
              <SendPart>Send element
                <svg width="14" height="15" viewBox="0 0 14 15" fill="none" stroke="#000" strokeWidth="1.100" strokeLinecap="round">
                  <path d="M2.200 10.500A6 6 0 1 1 11.800 10.500M4 9A3.600 3.600 0 1 1 10 9" />
                  <path d="M6 5.500 11.500 11H9.200l1.200 2.800-1.500.7L7.700 11.600 6 13z" fill="#000" stroke="none" />
                </svg>
              </SendPart>
              <SendPart $off>Send console errors (0)</SendPart>
            </SendBox>
          </Footer>
        </Page>
        <Scrollbar>
          <svg width="7" height="7" viewBox="0 0 7 7"><path d="M0 7 4 0h3v7z" fill="#9f9f9f" /></svg>
          <svg width="7" height="7" viewBox="0 0 7 7"><path d="M0 0 4 7h3V0z" fill="#9f9f9f" /></svg>
        </Scrollbar>
      </PageRow>

      <Taskbar>
        <Weather><Moon /><div>19°C<br /><span>Temps dégagé</span></div></Weather>
        <StartSlot><Windows /></StartSlot>
        <SearchPill><Search size={16} strokeWidth={2} color="#e2e5ee" />Rechercher</SearchPill>
        <Apps>
          <AppSlot><TaskView /></AppSlot>
          <AppSlot><Folder /></AppSlot>
          <AppSlot><Edge /></AppSlot>
          <AppSlot><Store /></AppSlot>
          <AppSlot><Cube /></AppSlot>
          <AppSlot><Netflix /></AppSlot>
          <AppSlot><Css3 /></AppSlot>
          <AppSlot><Tile $bg="#fffc00" $r={12}><SiSnapchat size={17} color="#fff" stroke="#222" strokeWidth={1} /></Tile><AppBadge $w={17} $r={4}>11</AppBadge></AppSlot>
          <AppSlot><Snip /></AppSlot>
          <AppSlot $run><Todo /></AppSlot>
          <AppSlot><Keyboard /></AppSlot>
          <AppSlot><Outlook /></AppSlot>
          <AppSlot><Tile $bg="#f07623"><SiXampp size={18} /></Tile></AppSlot>
          <AppSlot><Tile $bg="radial-gradient(circle at 30% 105%, #ffdc5a 5%, #fd7a3c 35%, #e1306c 60%, #8a3ab9 95%)" $r={5}><SiInstagram size={18} /></Tile></AppSlot>
          <AppSlot><Tiktok /></AppSlot>
          <AppSlot><Teams /></AppSlot>
          <AppSlot $run><SiOpenai size={24} /></AppSlot>
          <AppSlot><VsCode /></AppSlot>
          <AppSlot $run><Tile $bg="#1d8fee" $r={12}><SiDocker size={18} /></Tile></AppSlot>
          <AppSlot $run><Ww /></AppSlot>
          <AppSlot $run><PostmanMark /></AppSlot>
          <AppSlot $active><BraveMark size={24} color="#fb4a22" /><AppOverlay $r={3}><Planet size={15} /></AppOverlay></AppSlot>
          <AppSlot $run><Chrome /><AppOverlay><Face /></AppOverlay></AppSlot>
          <AppSlot $run><SiWhatsapp size={24} color="#25d366" /><AppBadge $w={27} $r={0}>99+</AppBadge></AppSlot>
        </Apps>
        <Clock>04:12<br />02/10/2025</Clock>
      </Taskbar>
    </Screen>
  );
}
